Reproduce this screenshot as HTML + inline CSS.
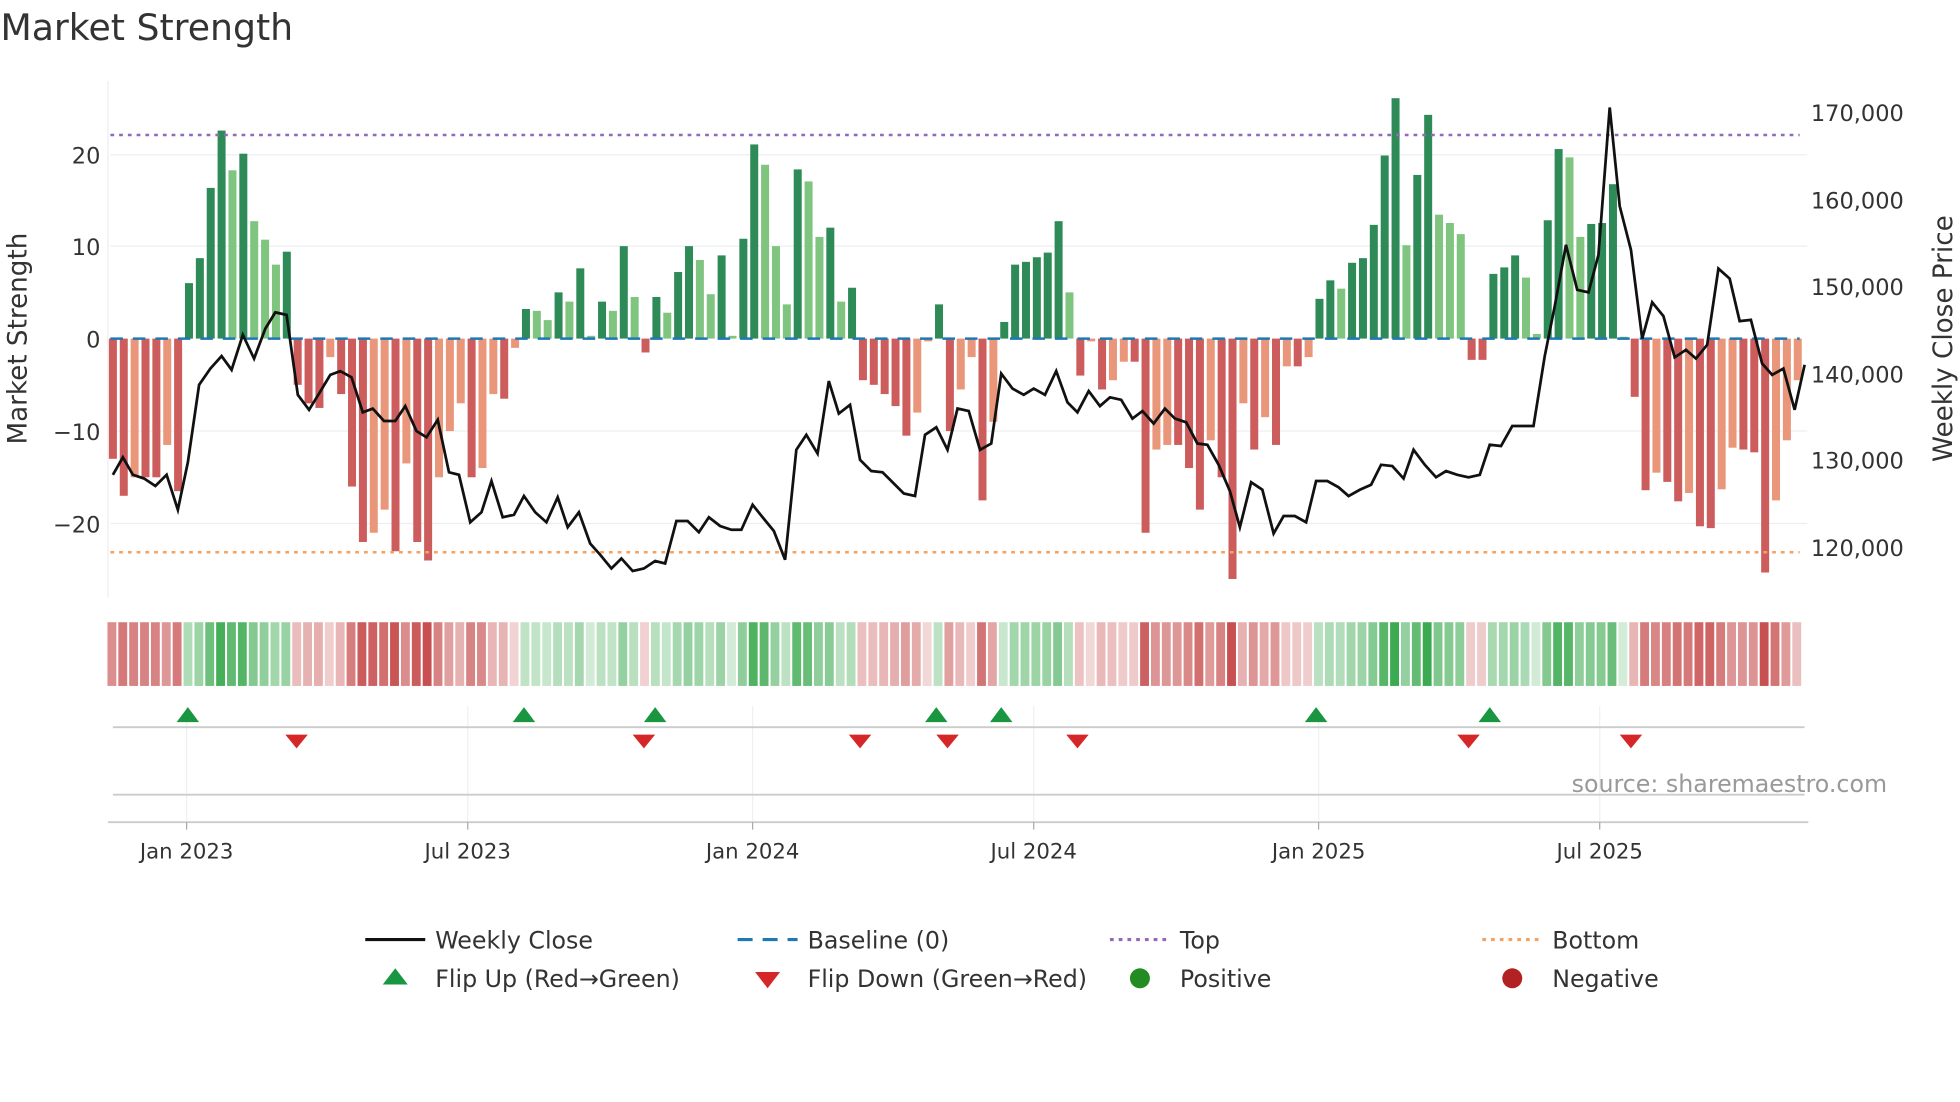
<!DOCTYPE html>
<html><head><meta charset="utf-8"><style>
html,body{margin:0;padding:0;background:#fff;width:1960px;height:1102px;overflow:hidden}
svg{display:block}
text{font-family:"DejaVu Sans","Liberation Sans",sans-serif;fill:#333}
</style></head><body>
<svg id="s" width="1960" height="1102" viewBox="0 0 1568 882" xmlns="http://www.w3.org/2000/svg">
<text x="0" y="32" font-size="29">Market Strength</text>
<line x1="86" y1="65" x2="86" y2="478" stroke="#eee"/>
<g stroke="#eceff1" stroke-width="1">
<line x1="88" y1="124" x2="1446" y2="124"/><line x1="88" y1="197" x2="1446" y2="197"/>
<line x1="88" y1="345" x2="1446" y2="345"/><line x1="88" y1="419" x2="1446" y2="419"/>
</g>
<g font-size="18" text-anchor="end">
<text x="80" y="131">20</text><text x="80" y="204">10</text><text x="80" y="278">0</text>
<text x="80" y="352">−10</text><text x="80" y="426">−20</text>
</g>
<g font-size="18">
<text x="1449" y="97">170,000</text><text x="1449" y="167">160,000</text><text x="1449" y="236">150,000</text>
<text x="1449" y="306">140,000</text><text x="1449" y="375">130,000</text><text x="1449" y="445">120,000</text>
</g>
<text font-size="21" transform="translate(21,271) rotate(-90)" text-anchor="middle">Market Strength</text>
<text font-size="21" transform="translate(1562,271) rotate(-90)" text-anchor="middle">Weekly Close Price</text>
<g id="bars"></g>
<line x1="88" y1="271" x2="1440" y2="271" stroke="#1f77b4" stroke-width="2" stroke-dasharray="10,8"/>
<line x1="88" y1="108" x2="1440" y2="108" stroke="#9467bd" stroke-width="2" stroke-dasharray="3,4"/>
<line x1="88" y1="442" x2="1440" y2="442" stroke="#f4a261" stroke-width="2" stroke-dasharray="3,4"/>
<polyline id="price" fill="none" stroke="#111" stroke-width="2.2"/>
<g id="heat"></g>
<g stroke="#f0f0f0"><line x1="149" y1="565" x2="149" y2="658"/><line x1="374" y1="565" x2="374" y2="658"/><line x1="602" y1="565" x2="602" y2="658"/><line x1="827" y1="565" x2="827" y2="658"/><line x1="1055" y1="565" x2="1055" y2="658"/><line x1="1280" y1="565" x2="1280" y2="658"/></g>
<line x1="90" y1="582" x2="1444" y2="582" stroke="#ccc" stroke-width="1.5"/>
<line x1="90" y1="636" x2="1444" y2="636" stroke="#ccc" stroke-width="1.5"/>
<line x1="86" y1="658" x2="1447" y2="658" stroke="#ccc" stroke-width="1.5"/>
<g id="flips"></g>
<text x="1510" y="634" font-size="19" style="fill:#999" text-anchor="end">source: sharemaestro.com</text>
<g stroke="#aaa"><line x1="149" y1="658" x2="149" y2="664"/><line x1="374" y1="658" x2="374" y2="664"/><line x1="602" y1="658" x2="602" y2="664"/><line x1="827" y1="658" x2="827" y2="664"/><line x1="1055" y1="658" x2="1055" y2="664"/><line x1="1280" y1="658" x2="1280" y2="664"/></g>
<g font-size="17" text-anchor="middle">
<text x="149" y="687">Jan 2023</text><text x="374" y="687">Jul 2023</text><text x="602" y="687">Jan 2024</text>
<text x="827" y="687">Jul 2024</text><text x="1055" y="687">Jan 2025</text><text x="1280" y="687">Jul 2025</text>
</g>
<g font-size="19">
<line x1="292" y1="752" x2="340" y2="752" stroke="#111" stroke-width="2.5"/><text x="348" y="759">Weekly Close</text>
<line x1="590" y1="752" x2="638" y2="752" stroke="#1f77b4" stroke-width="2.5" stroke-dasharray="12,8"/><text x="646" y="759">Baseline (0)</text>
<line x1="888" y1="752" x2="936" y2="752" stroke="#9467bd" stroke-width="2.5" stroke-dasharray="3,4"/><text x="944" y="759">Top</text>
<line x1="1186" y1="752" x2="1234" y2="752" stroke="#f4a261" stroke-width="2.5" stroke-dasharray="3,4"/><text x="1242" y="759">Bottom</text>
<polygon points="316,775 306,788 326,788" fill="#1a9641"/><text x="348" y="790">Flip Up (Red→Green)</text>
<polygon points="604,778 624,778 614,791" fill="#d62728"/><text x="646" y="790">Flip Down (Green→Red)</text>
<circle cx="912" cy="783" r="8" fill="#228b22"/><text x="944" y="790">Positive</text>
<circle cx="1210" cy="783" r="8" fill="#b22222"/><text x="1242" y="790">Negative</text>
</g>
</svg>
<script>
var v=[-13,-17,-15,-15,-15,-11.5,-16.5,
6,8.7,16.3,22.5,18.2,20,12.7,10.7,8,9.4,
-5,-7,-7.5,-2,-6,-16,-22,-21,-18.5,-23,-13.5,-22,-24,-15,-10,-7,-15,-14,-6,-6.5,-1,
3.2,3,2,5,4,7.6,0.3,4,3,10,4.5,-1.5,
4.5,2.8,7.2,10,8.5,4.8,9,0.3,10.8,21,18.8,10,3.7,18.3,17,11,12,4,5.5,
-4.5,-5,-6,-7.3,-10.5,-8,-0.3,3.7,
-10,-5.5,-2,-17.5,-9,1.8,8,8.3,8.8,9.3,12.7,5,
-4,-0.3,-5.5,-4.5,-2.5,-2.5,-21,-12,-11.5,-11.5,-14,-18.5,-11,-15,-26,-7,-12,-8.5,-11.5,-3,-3,-2,
4.3,6.3,5.4,8.2,8.7,12.3,19.8,26,10.1,17.7,24.2,13.4,12.5,11.3,
-2.3,-2.3,7,7.7,9,6.6,0.5,12.8,20.5,19.6,11,12.4,12.5,16.7,0.2,
-6.3,-16.4,-14.5,-15.5,-17.6,-16.7,-20.3,-20.5,-16.3,-11.8,-12,-12.3,-25.3,-17.5,-11,-4.5];
var b="",h="",sp=8.7;
for(var i=0;i<v.length;i++){var x=90+i*sp,a=v[i],p=i?v[i-1]:0,c;
if(a>=0)c=(a>=p)?"#2e8b57":"#7fc47f";else c=(a<=p)?"#cd5c5c":"#e9967a";
var y=a>=0?271-a*7.4:271,hh=Math.abs(a)*7.4;
b+='<rect x="'+(x-3.2)+'" y="'+y+'" width="6.4" height="'+hh+'" fill="'+c+'"/>';
var al=Math.min(1,0.22+Math.abs(a)/24*0.78);
var hc=a>=0?"rgba(60,170,80,"+al+")":"rgba(200,80,80,"+al+")";
h+='<rect x="'+(x-4.35)+'" y="498" width="'+(sp-1.6)+'" height="51" fill="'+hc+'"/>';}
document.getElementById("bars").innerHTML=b;document.getElementById("heat").innerHTML=h;
var pts="90,380 98,366 106,380 115,383 124,389 133,380 142,408 150,370 159,308 168,295 177,285 185,296 194,268 203,287 212,263 220,250 229,252 238,316 247,328 255,315 264,300 272,297 281,302 290,330 298,327 307,337 316,337 324,325 333,345 341,350 350,336 359,378 367,380 376,418 385,410 393,385 402,414 411,412 419,397 428,410 437,418 446,398 454,422 463,410 472,435 480,444 489,455 497,447 506,457 515,455 524,449 532,451 541,417 550,417 559,426 567,414 576,421 585,424 593,424 602,404 610,414 619,425 628,448 637,360 645,348 654,363 663,305 671,331 680,324 688,368 697,377 706,378 714,386 723,395 732,397 740,348 749,342 758,360 766,327 775,329 784,360 793,355 801,299 810,311 819,316 827,311 836,316 845,297 854,322 862,330 871,313 880,325 888,318 897,320 906,335 914,329 923,339 932,327 940,335 949,338 958,355 966,356 975,372 984,393 992,422 1001,386 1010,392 1019,427 1027,413 1036,413 1045,418 1053,385 1062,385 1071,390 1079,397 1088,392 1097,388 1105,372 1114,373 1123,383 1131,360 1140,372 1149,382 1157,377 1166,380 1175,382 1184,380 1192,356 1201,357 1210,341 1218,341 1227,341 1236,285 1244,245 1253,196 1262,232 1271,234 1279,204 1288,86 1296,165 1305,200 1314,271 1322,242 1331,253 1340,286 1349,280 1357,287 1366,276 1375,215 1384,223 1392,257 1401,256 1410,291 1418,300 1427,295 1436,328 1444,292";
document.getElementById("price").setAttribute("points",pts);
var f="",up=[150,419,524,749,801,1053,1192],dn=[237,515,688,758,862,1175,1305];
up.forEach(function(x){f+='<polygon points="'+x+',566 '+(x-9)+',578 '+(x+9)+',578" fill="#1a9641"/>';});
dn.forEach(function(x){f+='<polygon points="'+(x-9)+',588 '+(x+9)+',588 '+x+',599" fill="#d62728"/>';});
document.getElementById("flips").innerHTML=f;
</script>
</body></html>
